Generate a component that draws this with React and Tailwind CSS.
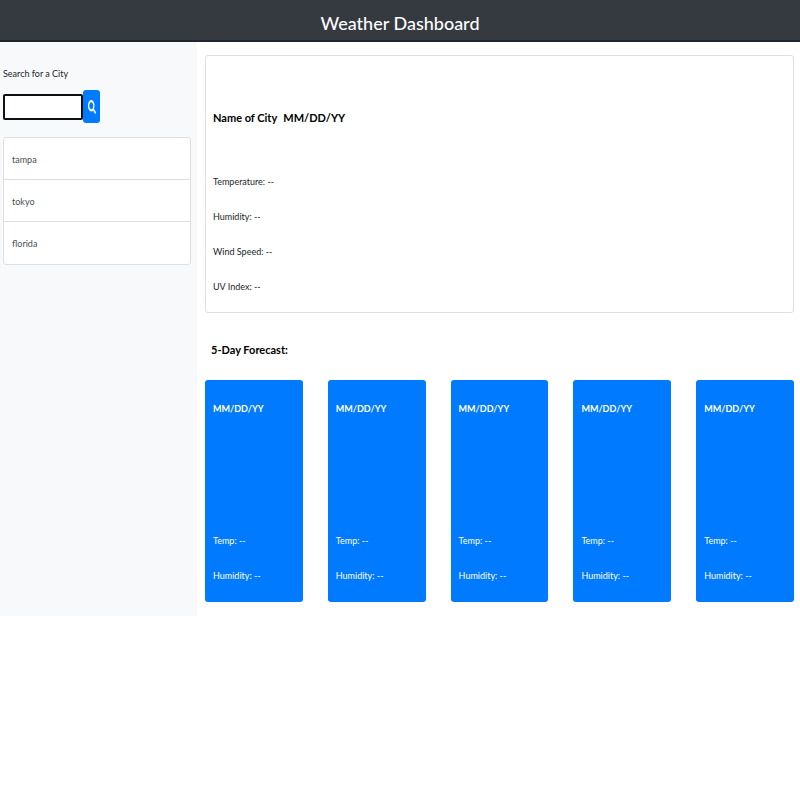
import { FaSearch } from "react-icons/fa";

const cities = ["tampa", "tokyo", "florida"];
const readings = ["Temperature: --", "Humidity: --", "Wind Speed: --", "UV Index: --"];
const days = [1, 2, 3, 4, 5];

export default function App() {
  return (
    <div className="min-h-screen bg-white font-[Lato,'Open_Sans',sans-serif] text-[9px] leading-4 text-[#212529]">
      <header className="flex h-[42px] items-center justify-center border-b-2 border-[#20262d] bg-[#343a40] pt-1.5">
        <h1 className="text-[18px] leading-8 font-medium text-white">Weather Dashboard</h1>
      </header>
      <div className="flex">
        <aside className="flex w-[197px] shrink-0 flex-col bg-[#f8f9fa] pt-6 pr-1.5 pl-[3px]">
          <label htmlFor="city">Search for a City</label>
          <form className="mt-2 flex items-center" onSubmit={(e) => e.preventDefault()}>
            <input
              id="city"
              type="text"
              className="h-[26px] w-20 rounded-xs border-2 border-[#101010] bg-white px-1 outline-none"
            />
            <button
              type="submit"
              aria-label="Search"
              className="flex h-[33px] w-[17px] items-center justify-center rounded-[3px] bg-[#007bff] text-white"
            >
              <FaSearch className="h-[14px] w-2" preserveAspectRatio="none" />
            </button>
          </form>
          <ul className="mt-3.5 divide-y divide-[#dfdfdf] rounded-[3px] border border-[#dfdfdf] bg-white">
            {cities.map((city) => (
              <li key={city} className="flex h-[42px] items-center px-2 pt-0.5 text-[#495057]">
                {city}
              </li>
            ))}
          </ul>
        </aside>
        <main className="min-w-0 grow pt-[13px] pr-1.5 pb-3.5 pl-2">
          <section className="rounded-[3px] border border-[#dfdfdf] px-[7px] pt-[52px] pb-[17px]">
            <h2 className="flex gap-1.5 text-[11px] leading-5 font-bold text-black">
              <span>Name of City</span>
              <span>MM/DD/YY</span>
            </h2>
            <div className="mt-[46px] flex flex-col gap-[19px]">
              {readings.map((reading) => (
                <p key={reading}>{reading}</p>
              ))}
            </div>
          </section>
          <h2 className="mt-[27px] px-1.5 text-[11px] leading-5 font-bold text-black">5-Day Forecast:</h2>
          <div className="mt-5 grid grid-cols-5 gap-[25px]">
            {days.map((day) => (
              <article key={day} className="rounded-[3px] bg-[#007bff] px-2 pt-[21px] pb-[18px] text-white">
                <h3 className="font-bold">MM/DD/YY</h3>
                <p className="mt-[116px]">Temp: --</p>
                <p className="mt-[19px]">Humidity: --</p>
              </article>
            ))}
          </div>
        </main>
      </div>
    </div>
  );
}
